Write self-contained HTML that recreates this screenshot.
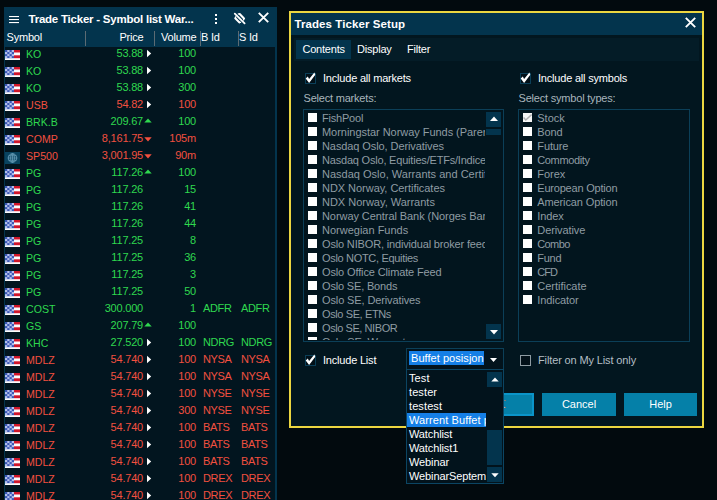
<!DOCTYPE html>
<html><head><meta charset="utf-8"><title>Trade Ticker</title>
<style>
*{box-sizing:border-box;margin:0;padding:0}
html,body{width:717px;height:500px;overflow:hidden;background:#020a0e;font-family:"Liberation Sans",sans-serif;font-size:11px;color:#fff;letter-spacing:-0.2px}
body{position:relative}
.abs{position:absolute}
#panel{position:absolute;left:4px;top:7px;width:273px;height:493px;background:#03344d}
#ptitle{position:absolute;left:0;top:0;width:273px;height:22px}
#ptitle .t{position:absolute;left:24.5px;top:5.5px;font-weight:bold;font-size:11.5px;white-space:nowrap;letter-spacing:-0.23px}
#phead{position:absolute;left:0;top:22px;width:273px;height:18px;color:#fff}
#phead span{position:absolute;top:2px;font-size:11px;white-space:nowrap}
#phead i{position:absolute;top:2px;width:1px;height:15px;background:#5c6b73}
#rows{position:absolute;left:1px;top:40px;width:270px;height:453px;background:#02151f;overflow:hidden}
.r{position:absolute;left:0;width:270px;height:17px;font-size:11px;white-space:nowrap}
.r span{position:absolute;top:0.4px}
.r .fl{position:absolute;left:0;top:3px}
.r .ar{position:absolute}
.g{color:#2fd84f}.rd{color:#f2503f}
.sy{left:21px;letter-spacing:0;font-size:10.6px;top:0.7px !important}.pr{right:132px;text-align:right}.vo{right:79px;text-align:right}.bi{left:198px;letter-spacing:-0.35px}.si{left:236px;letter-spacing:-0.35px}
#dlg{position:absolute;left:289px;top:11px;width:415px;height:417px;border:2px solid #ecd640;background:#02161f}
#dtitle{position:absolute;left:0;top:0;width:411px;height:22px;background:#03344d}
#dtitle .t{position:absolute;left:3.5px;top:5px;font-weight:bold;font-size:11.5px;white-space:nowrap;letter-spacing:0.08px}
#tabs{position:absolute;left:3px;top:25px;width:405px;height:23px;background:#041c27}
#tabs .sel{position:absolute;left:2px;top:2px;width:55px;height:19px;background:#03344d}
#tabs span{position:absolute;top:5px;white-space:nowrap}
.cb{position:absolute;width:11px;height:11px;border:1px solid #0b3f58;background:#021018}
.cbu{position:absolute;width:11px;height:11px;border:1px solid #8e9ba2;background:#021018}
.lbl{position:absolute;white-space:nowrap;color:#fff}
.lblg{position:absolute;white-space:nowrap;color:#a9b5bc}
.list{position:absolute;border:1px solid #0b3f58;background:#02151e;overflow:hidden}
.li{position:absolute;left:0;height:14px;white-space:nowrap;color:#8f9ca3;letter-spacing:-0.05px}
.li b{position:absolute;left:0;top:1px;width:9.4px;height:9px;background:#fff}
.li span{position:absolute;left:14px;top:0px}
.sb{position:absolute;background:#03344d}
.btn{letter-spacing:0;position:absolute;top:380px;height:23px;background:#0580a8;color:#fff;text-align:center;line-height:23px;font-size:11px}
</style></head><body>

<div id="panel"><div id="ptitle">
<svg class="abs" style="left:5px;top:8px" width="10" height="9" viewBox="0 0 10 9"><rect x="0" y="1" width="10" height="1.1" fill="#fff"/><rect x="0" y="4" width="10" height="1.1" fill="#fff"/><rect x="0" y="7" width="10" height="1.1" fill="#fff"/></svg>
<span class="t">Trade Ticker - Symbol list War...</span>
<svg class="abs" style="left:210px;top:6px" width="4" height="12" viewBox="0 0 4 12"><rect x="1" y="1" width="2" height="2" fill="#fff"/><rect x="1" y="5" width="2" height="2" fill="#fff"/><rect x="1" y="9" width="2" height="2" fill="#fff"/></svg>
<svg class="abs" style="left:229px;top:5px" width="14" height="14" viewBox="0 0 14 14"><g fill="none" stroke="#fff" stroke-linecap="round"><path d="M1.8 1.6L11.6 11.4" stroke-width="1.8"/><path d="M6.7 2.1L11 6.5" stroke-width="2.1"/><path d="M2.3 6.2L6.3 10.4" stroke-width="2.1"/><path d="M5.2 1.9L6.5 2.2M10.8 6.6L10.6 8" stroke-width="1.2"/><path d="M2.4 6L2.8 4.6M6.4 10.2L7.6 10.4" stroke-width="1.2"/></g></svg>
<svg class="abs" style="left:254px;top:5px" width="11" height="11" viewBox="0 0 11 11"><path d="M0.8 0.8L10.2 10.2M10.2 0.8L0.8 10.2" stroke="#fff" stroke-width="1.9"/></svg>
</div><div id="phead">
<span style="left:2.5px">Symbol</span><span style="right:133.5px">Price</span><span style="left:157px">Volume</span><span style="left:197px">B Id</span><span style="left:235px">S Id</span>
<i style="left:81px"></i>
<i style="left:150px"></i>
<i style="left:196px"></i>
<i style="left:234px"></i>
</div><div id="rows">
<div class="r g" style="top:0px"><svg class="fl" width="15" height="10" viewBox="0 0 15 10"><rect width="15" height="10.2" fill="#fafafc"/><rect x="9" y="0" width="6" height="2.5" fill="#d0152a"/><rect x="9" y="2.5" width="6" height="0.5" fill="#ee8a94"/><rect x="9" y="5.3" width="6" height="2.7" fill="#d0152a"/><rect x="9" y="8" width="6" height="0.4" fill="#ee8a94"/><rect width="9" height="8.2" fill="#3a56b6"/><g fill="#b4bfea"><rect x="2.25" y="0.00" width="2.25" height="2.05" /><rect x="6.75" y="0.00" width="2.25" height="2.05" /><rect x="0.00" y="2.05" width="2.25" height="2.05" /><rect x="4.50" y="2.05" width="2.25" height="2.05" /><rect x="2.25" y="4.10" width="2.25" height="2.05" /><rect x="6.75" y="4.10" width="2.25" height="2.05" /><rect x="0.00" y="6.15" width="2.25" height="2.05" /><rect x="4.50" y="6.15" width="2.25" height="2.05" /></g></svg><span class="sy">KO</span><span class="pr">53.88</span><svg class="ar" width="5" height="9" viewBox="0 0 5 9" style="left:142px;top:2.3px"><path d="M0 0.7L4.2 4.5L0 8.3z" fill="#fff"/></svg><span class="vo">100</span><span class="bi"></span><span class="si"></span></div>
<div class="r g" style="top:17px"><svg class="fl" width="15" height="10" viewBox="0 0 15 10"><rect width="15" height="10.2" fill="#fafafc"/><rect x="9" y="0" width="6" height="2.5" fill="#d0152a"/><rect x="9" y="2.5" width="6" height="0.5" fill="#ee8a94"/><rect x="9" y="5.3" width="6" height="2.7" fill="#d0152a"/><rect x="9" y="8" width="6" height="0.4" fill="#ee8a94"/><rect width="9" height="8.2" fill="#3a56b6"/><g fill="#b4bfea"><rect x="2.25" y="0.00" width="2.25" height="2.05" /><rect x="6.75" y="0.00" width="2.25" height="2.05" /><rect x="0.00" y="2.05" width="2.25" height="2.05" /><rect x="4.50" y="2.05" width="2.25" height="2.05" /><rect x="2.25" y="4.10" width="2.25" height="2.05" /><rect x="6.75" y="4.10" width="2.25" height="2.05" /><rect x="0.00" y="6.15" width="2.25" height="2.05" /><rect x="4.50" y="6.15" width="2.25" height="2.05" /></g></svg><span class="sy">KO</span><span class="pr">53.88</span><svg class="ar" width="5" height="9" viewBox="0 0 5 9" style="left:142px;top:2.3px"><path d="M0 0.7L4.2 4.5L0 8.3z" fill="#fff"/></svg><span class="vo">100</span><span class="bi"></span><span class="si"></span></div>
<div class="r g" style="top:34px"><svg class="fl" width="15" height="10" viewBox="0 0 15 10"><rect width="15" height="10.2" fill="#fafafc"/><rect x="9" y="0" width="6" height="2.5" fill="#d0152a"/><rect x="9" y="2.5" width="6" height="0.5" fill="#ee8a94"/><rect x="9" y="5.3" width="6" height="2.7" fill="#d0152a"/><rect x="9" y="8" width="6" height="0.4" fill="#ee8a94"/><rect width="9" height="8.2" fill="#3a56b6"/><g fill="#b4bfea"><rect x="2.25" y="0.00" width="2.25" height="2.05" /><rect x="6.75" y="0.00" width="2.25" height="2.05" /><rect x="0.00" y="2.05" width="2.25" height="2.05" /><rect x="4.50" y="2.05" width="2.25" height="2.05" /><rect x="2.25" y="4.10" width="2.25" height="2.05" /><rect x="6.75" y="4.10" width="2.25" height="2.05" /><rect x="0.00" y="6.15" width="2.25" height="2.05" /><rect x="4.50" y="6.15" width="2.25" height="2.05" /></g></svg><span class="sy">KO</span><span class="pr">53.88</span><svg class="ar" width="5" height="9" viewBox="0 0 5 9" style="left:142px;top:2.3px"><path d="M0 0.7L4.2 4.5L0 8.3z" fill="#fff"/></svg><span class="vo">300</span><span class="bi"></span><span class="si"></span></div>
<div class="r rd" style="top:51px"><svg class="fl" width="15" height="10" viewBox="0 0 15 10"><rect width="15" height="10.2" fill="#fafafc"/><rect x="9" y="0" width="6" height="2.5" fill="#d0152a"/><rect x="9" y="2.5" width="6" height="0.5" fill="#ee8a94"/><rect x="9" y="5.3" width="6" height="2.7" fill="#d0152a"/><rect x="9" y="8" width="6" height="0.4" fill="#ee8a94"/><rect width="9" height="8.2" fill="#3a56b6"/><g fill="#b4bfea"><rect x="2.25" y="0.00" width="2.25" height="2.05" /><rect x="6.75" y="0.00" width="2.25" height="2.05" /><rect x="0.00" y="2.05" width="2.25" height="2.05" /><rect x="4.50" y="2.05" width="2.25" height="2.05" /><rect x="2.25" y="4.10" width="2.25" height="2.05" /><rect x="6.75" y="4.10" width="2.25" height="2.05" /><rect x="0.00" y="6.15" width="2.25" height="2.05" /><rect x="4.50" y="6.15" width="2.25" height="2.05" /></g></svg><span class="sy">USB</span><span class="pr">54.82</span><svg class="ar" width="5" height="9" viewBox="0 0 5 9" style="left:142px;top:2.3px"><path d="M0 0.7L4.2 4.5L0 8.3z" fill="#fff"/></svg><span class="vo">100</span><span class="bi"></span><span class="si"></span></div>
<div class="r g" style="top:68px"><svg class="fl" width="15" height="10" viewBox="0 0 15 10"><rect width="15" height="10.2" fill="#fafafc"/><rect x="9" y="0" width="6" height="2.5" fill="#d0152a"/><rect x="9" y="2.5" width="6" height="0.5" fill="#ee8a94"/><rect x="9" y="5.3" width="6" height="2.7" fill="#d0152a"/><rect x="9" y="8" width="6" height="0.4" fill="#ee8a94"/><rect width="9" height="8.2" fill="#3a56b6"/><g fill="#b4bfea"><rect x="2.25" y="0.00" width="2.25" height="2.05" /><rect x="6.75" y="0.00" width="2.25" height="2.05" /><rect x="0.00" y="2.05" width="2.25" height="2.05" /><rect x="4.50" y="2.05" width="2.25" height="2.05" /><rect x="2.25" y="4.10" width="2.25" height="2.05" /><rect x="6.75" y="4.10" width="2.25" height="2.05" /><rect x="0.00" y="6.15" width="2.25" height="2.05" /><rect x="4.50" y="6.15" width="2.25" height="2.05" /></g></svg><span class="sy">BRK.B</span><span class="pr">209.67</span><svg class="ar" width="8" height="5" viewBox="0 0 8 5" style="left:139px;top:3px"><path d="M0.3 4.6L4 0.4L7.7 4.6z" fill="#2fd84f"/></svg><span class="vo">100</span><span class="bi"></span><span class="si"></span></div>
<div class="r rd" style="top:85px"><svg class="fl" width="15" height="10" viewBox="0 0 15 10"><rect width="15" height="10.2" fill="#fafafc"/><rect x="9" y="0" width="6" height="2.5" fill="#d0152a"/><rect x="9" y="2.5" width="6" height="0.5" fill="#ee8a94"/><rect x="9" y="5.3" width="6" height="2.7" fill="#d0152a"/><rect x="9" y="8" width="6" height="0.4" fill="#ee8a94"/><rect width="9" height="8.2" fill="#3a56b6"/><g fill="#b4bfea"><rect x="2.25" y="0.00" width="2.25" height="2.05" /><rect x="6.75" y="0.00" width="2.25" height="2.05" /><rect x="0.00" y="2.05" width="2.25" height="2.05" /><rect x="4.50" y="2.05" width="2.25" height="2.05" /><rect x="2.25" y="4.10" width="2.25" height="2.05" /><rect x="6.75" y="4.10" width="2.25" height="2.05" /><rect x="0.00" y="6.15" width="2.25" height="2.05" /><rect x="4.50" y="6.15" width="2.25" height="2.05" /></g></svg><span class="sy">COMP</span><span class="pr">8,161.75</span><svg class="ar" width="8" height="5" viewBox="0 0 8 5" style="left:139px;top:5px"><path d="M0.3 0.2L7.7 0.2L4 4.4z" fill="#f2503f"/></svg><span class="vo">105m</span><span class="bi"></span><span class="si"></span></div>
<div class="r rd" style="top:102px"><svg class="fl" width="15" height="12" viewBox="0 0 15 12" style="top:3px"><rect width="15" height="12" fill="#09435f"/><circle cx="7.5" cy="6" r="4.3" fill="none" stroke="#6da2bd" stroke-width="0.9"/><ellipse cx="7.5" cy="6" rx="2" ry="4.3" fill="none" stroke="#6da2bd" stroke-width="0.7"/><path d="M3.2 6h8.6M7.5 1.7v8.6M3.9 3.8h7.2M3.9 8.2h7.2" stroke="#6da2bd" stroke-width="0.7" fill="none"/></svg><span class="sy">SP500</span><span class="pr">3,001.95</span><svg class="ar" width="8" height="5" viewBox="0 0 8 5" style="left:139px;top:5px"><path d="M0.3 0.2L7.7 0.2L4 4.4z" fill="#f2503f"/></svg><span class="vo">90m</span><span class="bi"></span><span class="si"></span></div>
<div class="r g" style="top:119px"><svg class="fl" width="15" height="10" viewBox="0 0 15 10"><rect width="15" height="10.2" fill="#fafafc"/><rect x="9" y="0" width="6" height="2.5" fill="#d0152a"/><rect x="9" y="2.5" width="6" height="0.5" fill="#ee8a94"/><rect x="9" y="5.3" width="6" height="2.7" fill="#d0152a"/><rect x="9" y="8" width="6" height="0.4" fill="#ee8a94"/><rect width="9" height="8.2" fill="#3a56b6"/><g fill="#b4bfea"><rect x="2.25" y="0.00" width="2.25" height="2.05" /><rect x="6.75" y="0.00" width="2.25" height="2.05" /><rect x="0.00" y="2.05" width="2.25" height="2.05" /><rect x="4.50" y="2.05" width="2.25" height="2.05" /><rect x="2.25" y="4.10" width="2.25" height="2.05" /><rect x="6.75" y="4.10" width="2.25" height="2.05" /><rect x="0.00" y="6.15" width="2.25" height="2.05" /><rect x="4.50" y="6.15" width="2.25" height="2.05" /></g></svg><span class="sy">PG</span><span class="pr">117.26</span><svg class="ar" width="8" height="5" viewBox="0 0 8 5" style="left:139px;top:3px"><path d="M0.3 4.6L4 0.4L7.7 4.6z" fill="#2fd84f"/></svg><span class="vo">100</span><span class="bi"></span><span class="si"></span></div>
<div class="r g" style="top:136px"><svg class="fl" width="15" height="10" viewBox="0 0 15 10"><rect width="15" height="10.2" fill="#fafafc"/><rect x="9" y="0" width="6" height="2.5" fill="#d0152a"/><rect x="9" y="2.5" width="6" height="0.5" fill="#ee8a94"/><rect x="9" y="5.3" width="6" height="2.7" fill="#d0152a"/><rect x="9" y="8" width="6" height="0.4" fill="#ee8a94"/><rect width="9" height="8.2" fill="#3a56b6"/><g fill="#b4bfea"><rect x="2.25" y="0.00" width="2.25" height="2.05" /><rect x="6.75" y="0.00" width="2.25" height="2.05" /><rect x="0.00" y="2.05" width="2.25" height="2.05" /><rect x="4.50" y="2.05" width="2.25" height="2.05" /><rect x="2.25" y="4.10" width="2.25" height="2.05" /><rect x="6.75" y="4.10" width="2.25" height="2.05" /><rect x="0.00" y="6.15" width="2.25" height="2.05" /><rect x="4.50" y="6.15" width="2.25" height="2.05" /></g></svg><span class="sy">PG</span><span class="pr">117.26</span><span class="vo">15</span><span class="bi"></span><span class="si"></span></div>
<div class="r g" style="top:153px"><svg class="fl" width="15" height="10" viewBox="0 0 15 10"><rect width="15" height="10.2" fill="#fafafc"/><rect x="9" y="0" width="6" height="2.5" fill="#d0152a"/><rect x="9" y="2.5" width="6" height="0.5" fill="#ee8a94"/><rect x="9" y="5.3" width="6" height="2.7" fill="#d0152a"/><rect x="9" y="8" width="6" height="0.4" fill="#ee8a94"/><rect width="9" height="8.2" fill="#3a56b6"/><g fill="#b4bfea"><rect x="2.25" y="0.00" width="2.25" height="2.05" /><rect x="6.75" y="0.00" width="2.25" height="2.05" /><rect x="0.00" y="2.05" width="2.25" height="2.05" /><rect x="4.50" y="2.05" width="2.25" height="2.05" /><rect x="2.25" y="4.10" width="2.25" height="2.05" /><rect x="6.75" y="4.10" width="2.25" height="2.05" /><rect x="0.00" y="6.15" width="2.25" height="2.05" /><rect x="4.50" y="6.15" width="2.25" height="2.05" /></g></svg><span class="sy">PG</span><span class="pr">117.26</span><span class="vo">41</span><span class="bi"></span><span class="si"></span></div>
<div class="r g" style="top:170px"><svg class="fl" width="15" height="10" viewBox="0 0 15 10"><rect width="15" height="10.2" fill="#fafafc"/><rect x="9" y="0" width="6" height="2.5" fill="#d0152a"/><rect x="9" y="2.5" width="6" height="0.5" fill="#ee8a94"/><rect x="9" y="5.3" width="6" height="2.7" fill="#d0152a"/><rect x="9" y="8" width="6" height="0.4" fill="#ee8a94"/><rect width="9" height="8.2" fill="#3a56b6"/><g fill="#b4bfea"><rect x="2.25" y="0.00" width="2.25" height="2.05" /><rect x="6.75" y="0.00" width="2.25" height="2.05" /><rect x="0.00" y="2.05" width="2.25" height="2.05" /><rect x="4.50" y="2.05" width="2.25" height="2.05" /><rect x="2.25" y="4.10" width="2.25" height="2.05" /><rect x="6.75" y="4.10" width="2.25" height="2.05" /><rect x="0.00" y="6.15" width="2.25" height="2.05" /><rect x="4.50" y="6.15" width="2.25" height="2.05" /></g></svg><span class="sy">PG</span><span class="pr">117.26</span><span class="vo">44</span><span class="bi"></span><span class="si"></span></div>
<div class="r g" style="top:187px"><svg class="fl" width="15" height="10" viewBox="0 0 15 10"><rect width="15" height="10.2" fill="#fafafc"/><rect x="9" y="0" width="6" height="2.5" fill="#d0152a"/><rect x="9" y="2.5" width="6" height="0.5" fill="#ee8a94"/><rect x="9" y="5.3" width="6" height="2.7" fill="#d0152a"/><rect x="9" y="8" width="6" height="0.4" fill="#ee8a94"/><rect width="9" height="8.2" fill="#3a56b6"/><g fill="#b4bfea"><rect x="2.25" y="0.00" width="2.25" height="2.05" /><rect x="6.75" y="0.00" width="2.25" height="2.05" /><rect x="0.00" y="2.05" width="2.25" height="2.05" /><rect x="4.50" y="2.05" width="2.25" height="2.05" /><rect x="2.25" y="4.10" width="2.25" height="2.05" /><rect x="6.75" y="4.10" width="2.25" height="2.05" /><rect x="0.00" y="6.15" width="2.25" height="2.05" /><rect x="4.50" y="6.15" width="2.25" height="2.05" /></g></svg><span class="sy">PG</span><span class="pr">117.25</span><span class="vo">8</span><span class="bi"></span><span class="si"></span></div>
<div class="r g" style="top:204px"><svg class="fl" width="15" height="10" viewBox="0 0 15 10"><rect width="15" height="10.2" fill="#fafafc"/><rect x="9" y="0" width="6" height="2.5" fill="#d0152a"/><rect x="9" y="2.5" width="6" height="0.5" fill="#ee8a94"/><rect x="9" y="5.3" width="6" height="2.7" fill="#d0152a"/><rect x="9" y="8" width="6" height="0.4" fill="#ee8a94"/><rect width="9" height="8.2" fill="#3a56b6"/><g fill="#b4bfea"><rect x="2.25" y="0.00" width="2.25" height="2.05" /><rect x="6.75" y="0.00" width="2.25" height="2.05" /><rect x="0.00" y="2.05" width="2.25" height="2.05" /><rect x="4.50" y="2.05" width="2.25" height="2.05" /><rect x="2.25" y="4.10" width="2.25" height="2.05" /><rect x="6.75" y="4.10" width="2.25" height="2.05" /><rect x="0.00" y="6.15" width="2.25" height="2.05" /><rect x="4.50" y="6.15" width="2.25" height="2.05" /></g></svg><span class="sy">PG</span><span class="pr">117.25</span><span class="vo">36</span><span class="bi"></span><span class="si"></span></div>
<div class="r g" style="top:221px"><svg class="fl" width="15" height="10" viewBox="0 0 15 10"><rect width="15" height="10.2" fill="#fafafc"/><rect x="9" y="0" width="6" height="2.5" fill="#d0152a"/><rect x="9" y="2.5" width="6" height="0.5" fill="#ee8a94"/><rect x="9" y="5.3" width="6" height="2.7" fill="#d0152a"/><rect x="9" y="8" width="6" height="0.4" fill="#ee8a94"/><rect width="9" height="8.2" fill="#3a56b6"/><g fill="#b4bfea"><rect x="2.25" y="0.00" width="2.25" height="2.05" /><rect x="6.75" y="0.00" width="2.25" height="2.05" /><rect x="0.00" y="2.05" width="2.25" height="2.05" /><rect x="4.50" y="2.05" width="2.25" height="2.05" /><rect x="2.25" y="4.10" width="2.25" height="2.05" /><rect x="6.75" y="4.10" width="2.25" height="2.05" /><rect x="0.00" y="6.15" width="2.25" height="2.05" /><rect x="4.50" y="6.15" width="2.25" height="2.05" /></g></svg><span class="sy">PG</span><span class="pr">117.25</span><span class="vo">3</span><span class="bi"></span><span class="si"></span></div>
<div class="r g" style="top:238px"><svg class="fl" width="15" height="10" viewBox="0 0 15 10"><rect width="15" height="10.2" fill="#fafafc"/><rect x="9" y="0" width="6" height="2.5" fill="#d0152a"/><rect x="9" y="2.5" width="6" height="0.5" fill="#ee8a94"/><rect x="9" y="5.3" width="6" height="2.7" fill="#d0152a"/><rect x="9" y="8" width="6" height="0.4" fill="#ee8a94"/><rect width="9" height="8.2" fill="#3a56b6"/><g fill="#b4bfea"><rect x="2.25" y="0.00" width="2.25" height="2.05" /><rect x="6.75" y="0.00" width="2.25" height="2.05" /><rect x="0.00" y="2.05" width="2.25" height="2.05" /><rect x="4.50" y="2.05" width="2.25" height="2.05" /><rect x="2.25" y="4.10" width="2.25" height="2.05" /><rect x="6.75" y="4.10" width="2.25" height="2.05" /><rect x="0.00" y="6.15" width="2.25" height="2.05" /><rect x="4.50" y="6.15" width="2.25" height="2.05" /></g></svg><span class="sy">PG</span><span class="pr">117.25</span><span class="vo">50</span><span class="bi"></span><span class="si"></span></div>
<div class="r g" style="top:255px"><svg class="fl" width="15" height="10" viewBox="0 0 15 10"><rect width="15" height="10.2" fill="#fafafc"/><rect x="9" y="0" width="6" height="2.5" fill="#d0152a"/><rect x="9" y="2.5" width="6" height="0.5" fill="#ee8a94"/><rect x="9" y="5.3" width="6" height="2.7" fill="#d0152a"/><rect x="9" y="8" width="6" height="0.4" fill="#ee8a94"/><rect width="9" height="8.2" fill="#3a56b6"/><g fill="#b4bfea"><rect x="2.25" y="0.00" width="2.25" height="2.05" /><rect x="6.75" y="0.00" width="2.25" height="2.05" /><rect x="0.00" y="2.05" width="2.25" height="2.05" /><rect x="4.50" y="2.05" width="2.25" height="2.05" /><rect x="2.25" y="4.10" width="2.25" height="2.05" /><rect x="6.75" y="4.10" width="2.25" height="2.05" /><rect x="0.00" y="6.15" width="2.25" height="2.05" /><rect x="4.50" y="6.15" width="2.25" height="2.05" /></g></svg><span class="sy">COST</span><span class="pr">300.000</span><span class="vo">1</span><span class="bi">ADFR</span><span class="si">ADFR</span></div>
<div class="r g" style="top:272px"><svg class="fl" width="15" height="10" viewBox="0 0 15 10"><rect width="15" height="10.2" fill="#fafafc"/><rect x="9" y="0" width="6" height="2.5" fill="#d0152a"/><rect x="9" y="2.5" width="6" height="0.5" fill="#ee8a94"/><rect x="9" y="5.3" width="6" height="2.7" fill="#d0152a"/><rect x="9" y="8" width="6" height="0.4" fill="#ee8a94"/><rect width="9" height="8.2" fill="#3a56b6"/><g fill="#b4bfea"><rect x="2.25" y="0.00" width="2.25" height="2.05" /><rect x="6.75" y="0.00" width="2.25" height="2.05" /><rect x="0.00" y="2.05" width="2.25" height="2.05" /><rect x="4.50" y="2.05" width="2.25" height="2.05" /><rect x="2.25" y="4.10" width="2.25" height="2.05" /><rect x="6.75" y="4.10" width="2.25" height="2.05" /><rect x="0.00" y="6.15" width="2.25" height="2.05" /><rect x="4.50" y="6.15" width="2.25" height="2.05" /></g></svg><span class="sy">GS</span><span class="pr">207.79</span><svg class="ar" width="8" height="5" viewBox="0 0 8 5" style="left:139px;top:3px"><path d="M0.3 4.6L4 0.4L7.7 4.6z" fill="#2fd84f"/></svg><span class="vo">100</span><span class="bi"></span><span class="si"></span></div>
<div class="r g" style="top:289px"><svg class="fl" width="15" height="10" viewBox="0 0 15 10"><rect width="15" height="10.2" fill="#fafafc"/><rect x="9" y="0" width="6" height="2.5" fill="#d0152a"/><rect x="9" y="2.5" width="6" height="0.5" fill="#ee8a94"/><rect x="9" y="5.3" width="6" height="2.7" fill="#d0152a"/><rect x="9" y="8" width="6" height="0.4" fill="#ee8a94"/><rect width="9" height="8.2" fill="#3a56b6"/><g fill="#b4bfea"><rect x="2.25" y="0.00" width="2.25" height="2.05" /><rect x="6.75" y="0.00" width="2.25" height="2.05" /><rect x="0.00" y="2.05" width="2.25" height="2.05" /><rect x="4.50" y="2.05" width="2.25" height="2.05" /><rect x="2.25" y="4.10" width="2.25" height="2.05" /><rect x="6.75" y="4.10" width="2.25" height="2.05" /><rect x="0.00" y="6.15" width="2.25" height="2.05" /><rect x="4.50" y="6.15" width="2.25" height="2.05" /></g></svg><span class="sy">KHC</span><span class="pr">27.520</span><svg class="ar" width="5" height="9" viewBox="0 0 5 9" style="left:142px;top:2.3px"><path d="M0 0.7L4.2 4.5L0 8.3z" fill="#fff"/></svg><span class="vo">100</span><span class="bi">NDRG</span><span class="si">NDRG</span></div>
<div class="r rd" style="top:306px"><svg class="fl" width="15" height="10" viewBox="0 0 15 10"><rect width="15" height="10.2" fill="#fafafc"/><rect x="9" y="0" width="6" height="2.5" fill="#d0152a"/><rect x="9" y="2.5" width="6" height="0.5" fill="#ee8a94"/><rect x="9" y="5.3" width="6" height="2.7" fill="#d0152a"/><rect x="9" y="8" width="6" height="0.4" fill="#ee8a94"/><rect width="9" height="8.2" fill="#3a56b6"/><g fill="#b4bfea"><rect x="2.25" y="0.00" width="2.25" height="2.05" /><rect x="6.75" y="0.00" width="2.25" height="2.05" /><rect x="0.00" y="2.05" width="2.25" height="2.05" /><rect x="4.50" y="2.05" width="2.25" height="2.05" /><rect x="2.25" y="4.10" width="2.25" height="2.05" /><rect x="6.75" y="4.10" width="2.25" height="2.05" /><rect x="0.00" y="6.15" width="2.25" height="2.05" /><rect x="4.50" y="6.15" width="2.25" height="2.05" /></g></svg><span class="sy">MDLZ</span><span class="pr">54.740</span><svg class="ar" width="5" height="9" viewBox="0 0 5 9" style="left:142px;top:2.3px"><path d="M0 0.7L4.2 4.5L0 8.3z" fill="#fff"/></svg><span class="vo">100</span><span class="bi">NYSA</span><span class="si">NYSA</span></div>
<div class="r rd" style="top:323px"><svg class="fl" width="15" height="10" viewBox="0 0 15 10"><rect width="15" height="10.2" fill="#fafafc"/><rect x="9" y="0" width="6" height="2.5" fill="#d0152a"/><rect x="9" y="2.5" width="6" height="0.5" fill="#ee8a94"/><rect x="9" y="5.3" width="6" height="2.7" fill="#d0152a"/><rect x="9" y="8" width="6" height="0.4" fill="#ee8a94"/><rect width="9" height="8.2" fill="#3a56b6"/><g fill="#b4bfea"><rect x="2.25" y="0.00" width="2.25" height="2.05" /><rect x="6.75" y="0.00" width="2.25" height="2.05" /><rect x="0.00" y="2.05" width="2.25" height="2.05" /><rect x="4.50" y="2.05" width="2.25" height="2.05" /><rect x="2.25" y="4.10" width="2.25" height="2.05" /><rect x="6.75" y="4.10" width="2.25" height="2.05" /><rect x="0.00" y="6.15" width="2.25" height="2.05" /><rect x="4.50" y="6.15" width="2.25" height="2.05" /></g></svg><span class="sy">MDLZ</span><span class="pr">54.740</span><svg class="ar" width="5" height="9" viewBox="0 0 5 9" style="left:142px;top:2.3px"><path d="M0 0.7L4.2 4.5L0 8.3z" fill="#fff"/></svg><span class="vo">100</span><span class="bi">NYSA</span><span class="si">NYSA</span></div>
<div class="r rd" style="top:340px"><svg class="fl" width="15" height="10" viewBox="0 0 15 10"><rect width="15" height="10.2" fill="#fafafc"/><rect x="9" y="0" width="6" height="2.5" fill="#d0152a"/><rect x="9" y="2.5" width="6" height="0.5" fill="#ee8a94"/><rect x="9" y="5.3" width="6" height="2.7" fill="#d0152a"/><rect x="9" y="8" width="6" height="0.4" fill="#ee8a94"/><rect width="9" height="8.2" fill="#3a56b6"/><g fill="#b4bfea"><rect x="2.25" y="0.00" width="2.25" height="2.05" /><rect x="6.75" y="0.00" width="2.25" height="2.05" /><rect x="0.00" y="2.05" width="2.25" height="2.05" /><rect x="4.50" y="2.05" width="2.25" height="2.05" /><rect x="2.25" y="4.10" width="2.25" height="2.05" /><rect x="6.75" y="4.10" width="2.25" height="2.05" /><rect x="0.00" y="6.15" width="2.25" height="2.05" /><rect x="4.50" y="6.15" width="2.25" height="2.05" /></g></svg><span class="sy">MDLZ</span><span class="pr">54.740</span><svg class="ar" width="5" height="9" viewBox="0 0 5 9" style="left:142px;top:2.3px"><path d="M0 0.7L4.2 4.5L0 8.3z" fill="#fff"/></svg><span class="vo">100</span><span class="bi">NYSE</span><span class="si">NYSE</span></div>
<div class="r rd" style="top:357px"><svg class="fl" width="15" height="10" viewBox="0 0 15 10"><rect width="15" height="10.2" fill="#fafafc"/><rect x="9" y="0" width="6" height="2.5" fill="#d0152a"/><rect x="9" y="2.5" width="6" height="0.5" fill="#ee8a94"/><rect x="9" y="5.3" width="6" height="2.7" fill="#d0152a"/><rect x="9" y="8" width="6" height="0.4" fill="#ee8a94"/><rect width="9" height="8.2" fill="#3a56b6"/><g fill="#b4bfea"><rect x="2.25" y="0.00" width="2.25" height="2.05" /><rect x="6.75" y="0.00" width="2.25" height="2.05" /><rect x="0.00" y="2.05" width="2.25" height="2.05" /><rect x="4.50" y="2.05" width="2.25" height="2.05" /><rect x="2.25" y="4.10" width="2.25" height="2.05" /><rect x="6.75" y="4.10" width="2.25" height="2.05" /><rect x="0.00" y="6.15" width="2.25" height="2.05" /><rect x="4.50" y="6.15" width="2.25" height="2.05" /></g></svg><span class="sy">MDLZ</span><span class="pr">54.740</span><svg class="ar" width="5" height="9" viewBox="0 0 5 9" style="left:142px;top:2.3px"><path d="M0 0.7L4.2 4.5L0 8.3z" fill="#fff"/></svg><span class="vo">300</span><span class="bi">NYSE</span><span class="si">NYSE</span></div>
<div class="r rd" style="top:374px"><svg class="fl" width="15" height="10" viewBox="0 0 15 10"><rect width="15" height="10.2" fill="#fafafc"/><rect x="9" y="0" width="6" height="2.5" fill="#d0152a"/><rect x="9" y="2.5" width="6" height="0.5" fill="#ee8a94"/><rect x="9" y="5.3" width="6" height="2.7" fill="#d0152a"/><rect x="9" y="8" width="6" height="0.4" fill="#ee8a94"/><rect width="9" height="8.2" fill="#3a56b6"/><g fill="#b4bfea"><rect x="2.25" y="0.00" width="2.25" height="2.05" /><rect x="6.75" y="0.00" width="2.25" height="2.05" /><rect x="0.00" y="2.05" width="2.25" height="2.05" /><rect x="4.50" y="2.05" width="2.25" height="2.05" /><rect x="2.25" y="4.10" width="2.25" height="2.05" /><rect x="6.75" y="4.10" width="2.25" height="2.05" /><rect x="0.00" y="6.15" width="2.25" height="2.05" /><rect x="4.50" y="6.15" width="2.25" height="2.05" /></g></svg><span class="sy">MDLZ</span><span class="pr">54.740</span><svg class="ar" width="5" height="9" viewBox="0 0 5 9" style="left:142px;top:2.3px"><path d="M0 0.7L4.2 4.5L0 8.3z" fill="#fff"/></svg><span class="vo">100</span><span class="bi">BATS</span><span class="si">BATS</span></div>
<div class="r rd" style="top:391px"><svg class="fl" width="15" height="10" viewBox="0 0 15 10"><rect width="15" height="10.2" fill="#fafafc"/><rect x="9" y="0" width="6" height="2.5" fill="#d0152a"/><rect x="9" y="2.5" width="6" height="0.5" fill="#ee8a94"/><rect x="9" y="5.3" width="6" height="2.7" fill="#d0152a"/><rect x="9" y="8" width="6" height="0.4" fill="#ee8a94"/><rect width="9" height="8.2" fill="#3a56b6"/><g fill="#b4bfea"><rect x="2.25" y="0.00" width="2.25" height="2.05" /><rect x="6.75" y="0.00" width="2.25" height="2.05" /><rect x="0.00" y="2.05" width="2.25" height="2.05" /><rect x="4.50" y="2.05" width="2.25" height="2.05" /><rect x="2.25" y="4.10" width="2.25" height="2.05" /><rect x="6.75" y="4.10" width="2.25" height="2.05" /><rect x="0.00" y="6.15" width="2.25" height="2.05" /><rect x="4.50" y="6.15" width="2.25" height="2.05" /></g></svg><span class="sy">MDLZ</span><span class="pr">54.740</span><svg class="ar" width="5" height="9" viewBox="0 0 5 9" style="left:142px;top:2.3px"><path d="M0 0.7L4.2 4.5L0 8.3z" fill="#fff"/></svg><span class="vo">100</span><span class="bi">BATS</span><span class="si">BATS</span></div>
<div class="r rd" style="top:408px"><svg class="fl" width="15" height="10" viewBox="0 0 15 10"><rect width="15" height="10.2" fill="#fafafc"/><rect x="9" y="0" width="6" height="2.5" fill="#d0152a"/><rect x="9" y="2.5" width="6" height="0.5" fill="#ee8a94"/><rect x="9" y="5.3" width="6" height="2.7" fill="#d0152a"/><rect x="9" y="8" width="6" height="0.4" fill="#ee8a94"/><rect width="9" height="8.2" fill="#3a56b6"/><g fill="#b4bfea"><rect x="2.25" y="0.00" width="2.25" height="2.05" /><rect x="6.75" y="0.00" width="2.25" height="2.05" /><rect x="0.00" y="2.05" width="2.25" height="2.05" /><rect x="4.50" y="2.05" width="2.25" height="2.05" /><rect x="2.25" y="4.10" width="2.25" height="2.05" /><rect x="6.75" y="4.10" width="2.25" height="2.05" /><rect x="0.00" y="6.15" width="2.25" height="2.05" /><rect x="4.50" y="6.15" width="2.25" height="2.05" /></g></svg><span class="sy">MDLZ</span><span class="pr">54.740</span><svg class="ar" width="5" height="9" viewBox="0 0 5 9" style="left:142px;top:2.3px"><path d="M0 0.7L4.2 4.5L0 8.3z" fill="#fff"/></svg><span class="vo">100</span><span class="bi">BATS</span><span class="si">BATS</span></div>
<div class="r rd" style="top:425px"><svg class="fl" width="15" height="10" viewBox="0 0 15 10"><rect width="15" height="10.2" fill="#fafafc"/><rect x="9" y="0" width="6" height="2.5" fill="#d0152a"/><rect x="9" y="2.5" width="6" height="0.5" fill="#ee8a94"/><rect x="9" y="5.3" width="6" height="2.7" fill="#d0152a"/><rect x="9" y="8" width="6" height="0.4" fill="#ee8a94"/><rect width="9" height="8.2" fill="#3a56b6"/><g fill="#b4bfea"><rect x="2.25" y="0.00" width="2.25" height="2.05" /><rect x="6.75" y="0.00" width="2.25" height="2.05" /><rect x="0.00" y="2.05" width="2.25" height="2.05" /><rect x="4.50" y="2.05" width="2.25" height="2.05" /><rect x="2.25" y="4.10" width="2.25" height="2.05" /><rect x="6.75" y="4.10" width="2.25" height="2.05" /><rect x="0.00" y="6.15" width="2.25" height="2.05" /><rect x="4.50" y="6.15" width="2.25" height="2.05" /></g></svg><span class="sy">MDLZ</span><span class="pr">54.740</span><svg class="ar" width="5" height="9" viewBox="0 0 5 9" style="left:142px;top:2.3px"><path d="M0 0.7L4.2 4.5L0 8.3z" fill="#fff"/></svg><span class="vo">100</span><span class="bi">DREX</span><span class="si">DREX</span></div>
<div class="r rd" style="top:442px"><svg class="fl" width="15" height="10" viewBox="0 0 15 10"><rect width="15" height="10.2" fill="#fafafc"/><rect x="9" y="0" width="6" height="2.5" fill="#d0152a"/><rect x="9" y="2.5" width="6" height="0.5" fill="#ee8a94"/><rect x="9" y="5.3" width="6" height="2.7" fill="#d0152a"/><rect x="9" y="8" width="6" height="0.4" fill="#ee8a94"/><rect width="9" height="8.2" fill="#3a56b6"/><g fill="#b4bfea"><rect x="2.25" y="0.00" width="2.25" height="2.05" /><rect x="6.75" y="0.00" width="2.25" height="2.05" /><rect x="0.00" y="2.05" width="2.25" height="2.05" /><rect x="4.50" y="2.05" width="2.25" height="2.05" /><rect x="2.25" y="4.10" width="2.25" height="2.05" /><rect x="6.75" y="4.10" width="2.25" height="2.05" /><rect x="0.00" y="6.15" width="2.25" height="2.05" /><rect x="4.50" y="6.15" width="2.25" height="2.05" /></g></svg><span class="sy">MDLZ</span><span class="pr">54.740</span><svg class="ar" width="5" height="9" viewBox="0 0 5 9" style="left:142px;top:2.3px"><path d="M0 0.7L4.2 4.5L0 8.3z" fill="#fff"/></svg><span class="vo">100</span><span class="bi">DREX</span><span class="si">DREX</span></div>
</div></div>
<div id="dlg"><div id="dtitle"><span class="t">Trades Ticker Setup</span>
<svg class="abs" style="left:394px;top:4px" width="11" height="11" viewBox="0 0 11 11"><path d="M0.8 0.8L10.2 10.2M10.2 0.8L0.8 10.2" stroke="#fff" stroke-width="1.9"/></svg></div>
<div id="tabs"><div class="sel"></div><span style="left:8.4px">Contents</span><span style="left:63px">Display</span><span style="left:113px">Filter</span></div>
<div class="cb" style="left:14px;top:60px"><svg class="abs" style="left:-1px;top:-1px;overflow:visible" width="11" height="11" viewBox="0 0 11 11"><path d="M0.7 5.4L2.8 3.4L4.1 6.1L9.4 -0.5L10.3 1.7L4.1 9.9z" fill="#fff"/></svg></div><span class="lbl" style="left:32px;top:59px">Include all markets</span>
<span class="lblg" style="left:12.5px;top:79px">Select markets:</span>
<div class="cb" style="left:229px;top:60px"><svg class="abs" style="left:-1px;top:-1px;overflow:visible" width="11" height="11" viewBox="0 0 11 11"><path d="M0.7 5.4L2.8 3.4L4.1 6.1L9.4 -0.5L10.3 1.7L4.1 9.9z" fill="#fff"/></svg></div><span class="lbl" style="left:247px;top:59px">Include all symbols</span>
<span class="lblg" style="left:227.5px;top:79px">Select symbol types:</span>
<div class="list" style="left:12px;top:96px;width:201px;height:233px">
<div class="abs" style="left:0;top:0;width:181px;height:230px;overflow:hidden">
<div class="li" style="left:4px;top:2px;letter-spacing:-0.20px"><b></b><span>FishPool</span></div>
<div class="li" style="left:4px;top:16px;letter-spacing:-0.04px"><b></b><span>Morningstar Norway Funds (Parent)</span></div>
<div class="li" style="left:4px;top:30px;letter-spacing:-0.09px"><b></b><span>Nasdaq Oslo, Derivatives</span></div>
<div class="li" style="left:4px;top:44px;letter-spacing:-0.20px"><b></b><span>Nasdaq Oslo, Equities/ETFs/Indices</span></div>
<div class="li" style="left:4px;top:58px;letter-spacing:0.01px"><b></b><span>Nasdaq Oslo, Warrants and Certificates</span></div>
<div class="li" style="left:4px;top:72px;letter-spacing:-0.04px"><b></b><span>NDX Norway, Certificates</span></div>
<div class="li" style="left:4px;top:86px;letter-spacing:-0.01px"><b></b><span>NDX Norway, Warrants</span></div>
<div class="li" style="left:4px;top:100px;letter-spacing:-0.07px"><b></b><span>Norway Central Bank (Norges Bank)</span></div>
<div class="li" style="left:4px;top:114px;letter-spacing:-0.00px"><b></b><span>Norwegian Funds</span></div>
<div class="li" style="left:4px;top:128px;letter-spacing:-0.16px"><b></b><span>Oslo NIBOR, individual broker feeds</span></div>
<div class="li" style="left:4px;top:142px;letter-spacing:-0.32px"><b></b><span>Oslo NOTC, Equities</span></div>
<div class="li" style="left:4px;top:156px;letter-spacing:-0.13px"><b></b><span>Oslo Office Climate Feed</span></div>
<div class="li" style="left:4px;top:170px;letter-spacing:-0.17px"><b></b><span>Oslo SE, Bonds</span></div>
<div class="li" style="left:4px;top:184px;letter-spacing:-0.12px"><b></b><span>Oslo SE, Derivatives</span></div>
<div class="li" style="left:4px;top:198px;letter-spacing:-0.39px"><b></b><span>Oslo SE, ETNs</span></div>
<div class="li" style="left:4px;top:212px;letter-spacing:-0.43px"><b></b><span>Oslo SE, NIBOR</span></div>
<div class="li" style="left:4px;top:226px;letter-spacing:-0.10px"><b></b><span>Oslo SE, Warrants</span></div>
</div>
<div class="sb" style="left:182px;top:2px;width:15px;height:15px"><svg class="abs" style="left:4px;top:4.3px" width="8" height="5" viewBox="0 0 8 5"><path d="M0 5L4 0.5L8 5z" fill="#fff"/></svg></div>
<div class="sb" style="left:182px;top:19px;width:15px;height:6px"></div>
<div class="sb" style="left:182px;top:214px;width:15px;height:15px"><svg class="abs" style="left:4px;top:6px" width="8" height="5" viewBox="0 0 8 5"><path d="M0 0L8 0L4 4.5z" fill="#fff"/></svg></div>
</div>
<div class="list" style="left:227px;top:96px;width:172px;height:233px">
<div class="li" style="left:3.8px;top:2px;letter-spacing:-0.03px"><b style="background:#f6f6f6;width:9.2px"><svg class="abs" style="left:0px;top:0px" width="9" height="9" viewBox="0 0 9 9"><path d="M0.6 4.6L2.8 6.9L8.6 1.6" fill="none" stroke="#b0b0b0" stroke-width="1.4"/></svg></b><span style="left:14.5px">Stock</span></div>
<div class="li" style="left:3.8px;top:16px;letter-spacing:-0.10px"><b style="width:9.2px"></b><span style="left:14.5px">Bond</span></div>
<div class="li" style="left:3.8px;top:30px;letter-spacing:-0.12px"><b style="width:9.2px"></b><span style="left:14.5px">Future</span></div>
<div class="li" style="left:3.8px;top:44px;letter-spacing:-0.38px"><b style="width:9.2px"></b><span style="left:14.5px">Commodity</span></div>
<div class="li" style="left:3.8px;top:58px;letter-spacing:-0.01px"><b style="width:9.2px"></b><span style="left:14.5px">Forex</span></div>
<div class="li" style="left:3.8px;top:72px;letter-spacing:-0.21px"><b style="width:9.2px"></b><span style="left:14.5px">European Option</span></div>
<div class="li" style="left:3.8px;top:86px;letter-spacing:-0.12px"><b style="width:9.2px"></b><span style="left:14.5px">American Option</span></div>
<div class="li" style="left:3.8px;top:100px;letter-spacing:-0.13px"><b style="width:9.2px"></b><span style="left:14.5px">Index</span></div>
<div class="li" style="left:3.8px;top:114px;letter-spacing:-0.10px"><b style="width:9.2px"></b><span style="left:14.5px">Derivative</span></div>
<div class="li" style="left:3.8px;top:128px;letter-spacing:-0.62px"><b style="width:9.2px"></b><span style="left:14.5px">Combo</span></div>
<div class="li" style="left:3.8px;top:142px;letter-spacing:-0.29px"><b style="width:9.2px"></b><span style="left:14.5px">Fund</span></div>
<div class="li" style="left:3.8px;top:156px;letter-spacing:-1.00px"><b style="width:9.2px"></b><span style="left:14.5px">CFD</span></div>
<div class="li" style="left:3.8px;top:170px;letter-spacing:-0.02px"><b style="width:9.2px"></b><span style="left:14.5px">Certificate</span></div>
<div class="li" style="left:3.8px;top:184px;letter-spacing:-0.10px"><b style="width:9.2px"></b><span style="left:14.5px">Indicator</span></div>
</div>
<div class="cb" style="left:14px;top:342px"><svg class="abs" style="left:-1px;top:-1px;overflow:visible" width="11" height="11" viewBox="0 0 11 11"><path d="M0.7 5.4L2.8 3.4L4.1 6.1L9.4 -0.5L10.3 1.7L4.1 9.9z" fill="#fff"/></svg></div><span class="lbl" style="left:32px;top:341px">Include List</span>
<div class="cbu" style="left:229px;top:342px"></div><span class="lblg" style="left:247px;top:341px;color:#b4bfc5;letter-spacing:-0.13px">Filter on My List only</span>
<div class="abs" style="left:115px;top:335px;width:98px;height:22px;border:1px solid #0b3f58;background:#02131c"><div class="abs" style="left:2px;top:2px;width:75px;height:14px;background:#157fe6;overflow:hidden;white-space:nowrap;letter-spacing:0.05px"><span class="abs" style="left:2px;top:1px">Buffet posisjoner</span></div><svg class="abs" style="left:83px;top:9px" width="7" height="4" viewBox="0 0 7 4"><path d="M0 0L7 0L3.5 4z" fill="#fff"/></svg></div>
<div class="btn" style="left:169px;width:74px;border:2px solid #0b95c9;line-height:19px">OK</div>
<div class="btn" style="left:251px;width:74px">Cancel</div>
<div class="btn" style="left:333px;width:73px">Help</div>
</div>
<div class="abs" style="left:406px;top:369px;width:98px;height:115px;border:1px solid #0b4563;background:#02131c;overflow:hidden;letter-spacing:0.1px">
<div class="abs" style="left:0;top:0;width:78.5px;height:113px;overflow:hidden">
<span class="abs" style="left:2px;top:2px;white-space:nowrap">Test</span>
<span class="abs" style="left:2px;top:16px;white-space:nowrap">tester</span>
<span class="abs" style="left:2px;top:30px;white-space:nowrap">testest</span>
<div class="abs" style="left:0px;top:43px;width:79px;height:14px;background:#157fe6"></div>
<span class="abs" style="left:2px;top:44px;white-space:nowrap">Warrent Buffet posisjoner</span>
<span class="abs" style="left:2px;top:58px;white-space:nowrap;letter-spacing:-0.12px">Watchlist</span>
<span class="abs" style="left:2px;top:72px;white-space:nowrap;letter-spacing:-0.12px">Watchlist1</span>
<span class="abs" style="left:2px;top:86px;white-space:nowrap;letter-spacing:-0.12px">Webinar</span>
<span class="abs" style="left:2px;top:100px;white-space:nowrap;letter-spacing:-0.12px">WebinarSeptember</span>
</div>
<div class="sb" style="left:80px;top:2px;width:15px;height:15px"><svg class="abs" style="left:4px;top:5px" width="8" height="5" viewBox="0 0 8 5"><path d="M0.3 4.6L4 0.6L7.7 4.6z" fill="#fff"/></svg></div>
<div class="sb" style="left:80px;top:60px;width:15px;height:35px"></div>
<div class="sb" style="left:80px;top:97px;width:15px;height:14.6px"><svg class="abs" style="left:4px;top:5.5px" width="8" height="5" viewBox="0 0 8 5"><path d="M0.3 0.2L7.7 0.2L4 4.2z" fill="#fff"/></svg></div>
</div>
<div class="abs" style="left:504.5px;top:400px;width:1px;height:1px;background:#8d7468"></div><div class="abs" style="left:504.5px;top:407px;width:1px;height:1px;background:#8d7468"></div>
</body></html>
